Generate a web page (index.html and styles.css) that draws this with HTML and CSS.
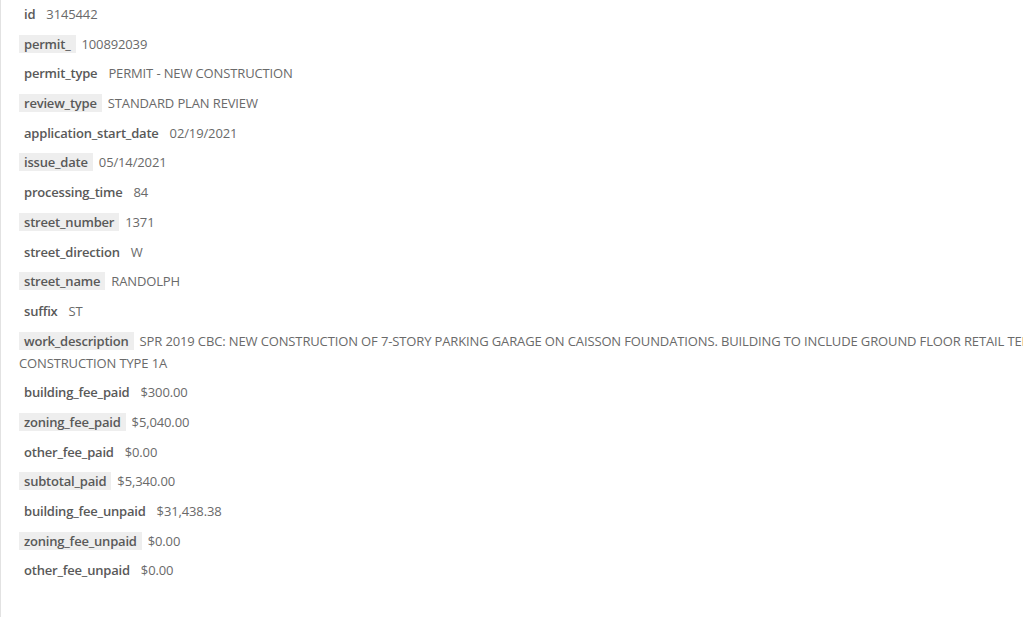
FILE: index.html
```html
<!DOCTYPE html>
<html lang="en">
<head>
    <meta charset="UTF-8">
    <meta name="viewport" content="width=device-width, initial-scale=1.0">
    <title>Permit 3145442</title>
    <link rel="stylesheet" href="styles.css">
</head>
<body>

    <div class="panel">
        <div class="record">
            <p class="field"><span class="field__key">id</span>3145442</p>
            <p class="field field--shade"><span class="field__key">permit_</span>100892039</p>
            <p class="field"><span class="field__key">permit_type</span>PERMIT - NEW CONSTRUCTION</p>
            <p class="field field--shade"><span class="field__key">review_type</span>STANDARD PLAN REVIEW</p>
            <p class="field"><span class="field__key">application_start_date</span>02/19/2021</p>
            <p class="field field--shade"><span class="field__key">issue_date</span>05/14/2021</p>
            <p class="field"><span class="field__key">processing_time</span>84</p>
            <p class="field field--shade"><span class="field__key">street_number</span>1371</p>
            <p class="field"><span class="field__key">street_direction</span>W</p>
            <p class="field field--shade"><span class="field__key">street_name</span>RANDOLPH</p>
            <p class="field"><span class="field__key">suffix</span>ST</p>
            <p class="field field--shade"><span class="field__key">work_description</span>SPR 2019 CBC: NEW CONSTRUCTION OF 7-STORY PARKING GARAGE ON CAISSON FOUNDATIONS. BUILDING TO INCLUDE GROUND FLOOR RETAIL TENANT SPACE. CONSTRUCTION TYPE 1A</p>
            <p class="field"><span class="field__key">building_fee_paid</span>$300.00</p>
            <p class="field field--shade"><span class="field__key">zoning_fee_paid</span>$5,040.00</p>
            <p class="field"><span class="field__key">other_fee_paid</span>$0.00</p>
            <p class="field field--shade"><span class="field__key">subtotal_paid</span>$5,340.00</p>
            <p class="field"><span class="field__key">building_fee_unpaid</span>$31,438.38</p>
            <p class="field field--shade"><span class="field__key">zoning_fee_unpaid</span>$0.00</p>
            <p class="field"><span class="field__key">other_fee_unpaid</span>$0.00</p>
        </div>
    </div>

</body>
</html>
```

FILE: styles.css
```css
html, body {
    margin: 0;
    padding: 0;
    height: 100%;
    overflow: hidden;
    background-color: #fff;
}

body {
    font-family: "Open Sans", "Liberation Sans", Arial, sans-serif;
    font-size: 13px;
    color: #6a6a6a;
}

.panel {
    height: 100%;
    border-left: 1px solid #e2e2e2;
    padding: 3px 0 0 18px;
    box-sizing: border-box;
}

/* wider than the window, long values run off the right edge */
.record {
    width: 1150px;
}

.field {
    margin: 0 0 7.7px;
    line-height: 22px;
    letter-spacing: -0.13px;
}

.field__key {
    font-weight: 600;
    color: #595959;
    padding: 0 5px;
    margin-right: 6px;
    letter-spacing: -0.2px;
}

.field--shade .field__key {
    background-color: #eeeeee;
}
```
